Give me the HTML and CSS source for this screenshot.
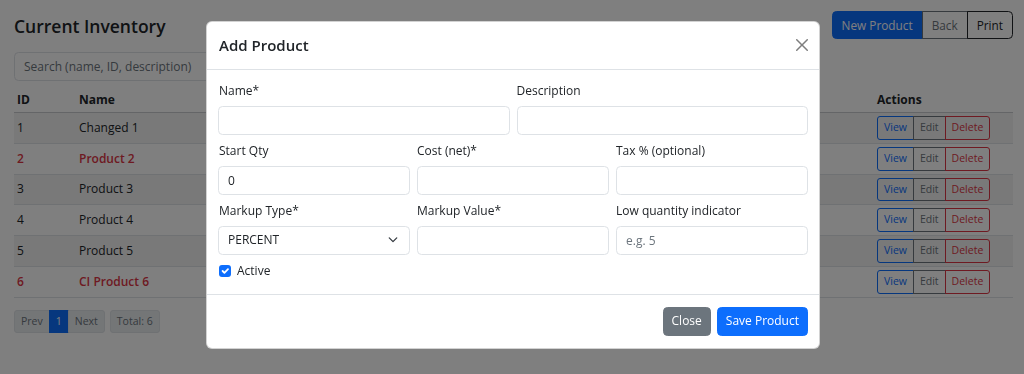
FILE: index.html
```html
<!DOCTYPE html>
<html>
<head>
    <meta charset="utf-8">
    <meta name="viewport" content="width=device-width">
    <title>Current Inventory</title>
    <link rel="stylesheet" href="styles.css">
</head>

<body>
    <div class="page">
        <div class="topbar">
            <h3 class="page__title">Current Inventory</h3>
            <div class="btn-group">
                <button class="btn btn--primary">New Product</button>
                <button class="btn btn--outline-secondary">Back</button>
                <button class="btn btn--outline-dark">Print</button>
            </div>
        </div>

        <input class="form-control search" type="text" placeholder="Search (name, ID, description)">

        <table class="inv">
            <colgroup>
                <col class="inv__col-id">
                <col>
                <col class="inv__col-actions">
            </colgroup>
            <thead>
                <tr>
                    <th>ID</th>
                    <th>Name</th>
                    <th>Actions</th>
                </tr>
            </thead>
            <tbody>
                <tr>
                    <td>1</td><td>Changed 1</td>
                    <td><div class="btn-group"><button class="btn btn--sm btn--outline-primary">View</button><button class="btn btn--sm btn--outline-secondary">Edit</button><button class="btn btn--sm btn--outline-danger">Delete</button></div></td>
                </tr>
                <tr class="inv__low">
                    <td>2</td><td>Product 2</td>
                    <td><div class="btn-group"><button class="btn btn--sm btn--outline-primary">View</button><button class="btn btn--sm btn--outline-secondary">Edit</button><button class="btn btn--sm btn--outline-danger">Delete</button></div></td>
                </tr>
                <tr>
                    <td>3</td><td>Product 3</td>
                    <td><div class="btn-group"><button class="btn btn--sm btn--outline-primary">View</button><button class="btn btn--sm btn--outline-secondary">Edit</button><button class="btn btn--sm btn--outline-danger">Delete</button></div></td>
                </tr>
                <tr>
                    <td>4</td><td>Product 4</td>
                    <td><div class="btn-group"><button class="btn btn--sm btn--outline-primary">View</button><button class="btn btn--sm btn--outline-secondary">Edit</button><button class="btn btn--sm btn--outline-danger">Delete</button></div></td>
                </tr>
                <tr>
                    <td>5</td><td>Product 5</td>
                    <td><div class="btn-group"><button class="btn btn--sm btn--outline-primary">View</button><button class="btn btn--sm btn--outline-secondary">Edit</button><button class="btn btn--sm btn--outline-danger">Delete</button></div></td>
                </tr>
                <tr class="inv__low">
                    <td>6</td><td>CI Product 6</td>
                    <td><div class="btn-group"><button class="btn btn--sm btn--outline-primary">View</button><button class="btn btn--sm btn--outline-secondary">Edit</button><button class="btn btn--sm btn--outline-danger">Delete</button></div></td>
                </tr>
            </tbody>
        </table>

        <div class="pager">
            <ul class="pagination">
                <li class="page-item">Prev</li>
                <li class="page-item page-item--active">1</li>
                <li class="page-item">Next</li>
            </ul>
            <span class="pager__total">Total: 6</span>
        </div>
    </div>

    <div class="backdrop"></div>

    <div class="modal">
        <div class="modal__content">
            <div class="modal__header">
                <h5 class="modal__title">Add Product</h5>
                <button class="btn-close" aria-label="Close">
                    <svg width="12" height="12" viewBox="0 0 16 16"><path fill="#000" d="M.293.293a1 1 0 0 1 1.414 0L8 6.586 14.293.293a1 1 0 1 1 1.414 1.414L9.414 8l6.293 6.293a1 1 0 0 1-1.414 1.414L8 9.414l-6.293 6.293a1 1 0 0 1-1.414-1.414L6.586 8 .293 1.707a1 1 0 0 1 0-1.414"/></svg>
                </button>
            </div>
            <div class="modal__body">
                <div class="form-row form-row--2">
                    <div class="field">
                        <label class="field__label">Name*</label>
                        <input class="form-control" type="text">
                    </div>
                    <div class="field">
                        <label class="field__label">Description</label>
                        <input class="form-control" type="text">
                    </div>
                </div>
                <div class="form-row form-row--3">
                    <div class="field">
                        <label class="field__label">Start Qty</label>
                        <input class="form-control" type="text" value="0">
                    </div>
                    <div class="field">
                        <label class="field__label">Cost (net)*</label>
                        <input class="form-control" type="text">
                    </div>
                    <div class="field">
                        <label class="field__label">Tax % (optional)</label>
                        <input class="form-control" type="text">
                    </div>
                </div>
                <div class="form-row form-row--3">
                    <div class="field">
                        <label class="field__label">Markup Type*</label>
                        <div class="form-control form-select">
                            <span>PERCENT</span>
                            <svg width="10" height="7.5" viewBox="0 0 16 12"><path fill="none" stroke="#343a40" stroke-linecap="round" stroke-linejoin="round" stroke-width="2" d="M2 3l6 6 6-6"/></svg>
                        </div>
                    </div>
                    <div class="field">
                        <label class="field__label">Markup Value*</label>
                        <input class="form-control" type="text">
                    </div>
                    <div class="field">
                        <label class="field__label">Low quantity indicator</label>
                        <input class="form-control" type="text" placeholder="e.g. 5">
                    </div>
                </div>
                <div class="form-check">
                    <span class="form-check__box">
                        <svg width="12" height="12" viewBox="0 0 20 20"><path fill="none" stroke="#fff" stroke-linecap="round" stroke-linejoin="round" stroke-width="3" d="m6 10 3 3 6-6"/></svg>
                    </span>
                    <label class="form-check__label">Active</label>
                </div>
            </div>
            <div class="modal__footer">
                <button class="btn btn--secondary">Close</button>
                <button class="btn btn--primary">Save Product</button>
            </div>
        </div>
    </div>
</body>
</html>
```

FILE: styles.css
```css
* {
    box-sizing: border-box;
}

html, body {
    margin: 0;
    padding: 0;
}

body {
    height: 100vh;
    font: 12px/1.5 "Open Sans", "Noto Sans", sans-serif;
    color: #212529;
    background: #fff;
}

button, input {
    font: inherit;
}

.page {
    padding: 11px 11px 0 14px;
}

.topbar {
    display: flex;
    justify-content: space-between;
    align-items: center;
}

.page__title {
    margin: 0;
    font-size: 17.5px;
    font-weight: 600;
    line-height: 1.2;
    padding-top: 2px;
}

/* buttons */
.btn {
    display: inline-block;
    padding: 4.5px 9px;
    font-size: 12px;
    line-height: 18px;
    border: 1px solid transparent;
    border-radius: 4.5px;
    background: transparent;
    cursor: pointer;
}

.topbar .btn {
    padding: 4px 9px;
    font-size: 11.8px;
}

.modal__footer .btn {
    padding-left: 8px;
    padding-right: 8px;
}

.btn--sm {
    padding: 3px 6px;
    font-size: 10.5px;
    line-height: 15.75px;
    border-radius: 3px;
}

.btn--primary {
    background: #0d6efd;
    border-color: #0d6efd;
    color: #fff;
}

.btn--secondary {
    background: #6c757d;
    border-color: #6c757d;
    color: #fff;
}

.btn--outline-primary {
    border-color: #0d6efd;
    color: #0d6efd;
}

.btn--outline-secondary {
    border-color: #6c757d;
    color: #6c757d;
}

.btn--outline-danger {
    border-color: #dc3545;
    color: #dc3545;
}

.btn--outline-dark {
    border-color: #212529;
    color: #212529;
}

.btn-group {
    display: inline-flex;
}

.btn-group .btn {
    border-radius: 0;
}

.btn-group .btn + .btn {
    margin-left: -1px;
}

.btn-group .btn:first-child {
    border-top-left-radius: 4.5px;
    border-bottom-left-radius: 4.5px;
}

.btn-group .btn:last-child {
    border-top-right-radius: 4.5px;
    border-bottom-right-radius: 4.5px;
}

.btn-group .btn--sm:first-child {
    border-top-left-radius: 3px;
    border-bottom-left-radius: 3px;
}

.btn-group .btn--sm:last-child {
    border-top-right-radius: 3px;
    border-bottom-right-radius: 3px;
}

/* inputs */
.form-control {
    display: block;
    width: 100%;
    height: 29px;
    padding: 4.5px 9px;
    font-size: 12px;
    line-height: 18px;
    color: #212529;
    background: #fff;
    border: 1px solid #dee2e6;
    border-radius: 4.5px;
}

.form-control::placeholder {
    color: #6c757d;
}

.search {
    margin-top: 13px;
    width: 600px;
}

/* table */
.inv {
    width: 100%;
    margin-top: 6px;
    border-collapse: collapse;
    table-layout: fixed;
}

.inv__col-id {
    width: 62px;
}

.inv__col-actions {
    width: 139px;
}

.inv th,
.inv td {
    padding: 3px;
    text-align: left;
    vertical-align: middle;
    border-bottom: 1px solid #dee2e6;
}

.inv th {
    font-weight: 700;
    line-height: 18px;
    padding-top: 4px;
    border-bottom-color: #c8cbcf;
}

.inv tbody tr:nth-child(odd) td {
    background: #f2f2f2;
}

.inv__low td {
    color: #dc3545;
    font-weight: 600;
}

.inv__low td .btn {
    font-weight: 400;
}

/* pagination */
.pager {
    display: flex;
    align-items: center;
    gap: 5px;
    margin-top: 12px;
}

.pagination {
    display: flex;
    margin: 0;
    padding: 0;
    list-style: none;
}

.page-item {
    padding: 3px 6px;
    font-size: 10.5px;
    line-height: 15.75px;
    color: #6c757d;
    background: #e9ecef;
    border: 1px solid #dee2e6;
}

.page-item + .page-item {
    margin-left: -1px;
}

.page-item:first-child {
    border-radius: 3px 0 0 3px;
}

.page-item:last-child {
    border-radius: 0 3px 3px 0;
}

.page-item--active {
    background: #0d6efd;
    border-color: #0d6efd;
    color: #fff;
}

.pager__total {
    padding: 3px 6px;
    font-size: 10.5px;
    line-height: 15.75px;
    color: #6c757d;
    background: #e9ecef;
    border: 1px solid #dee2e6;
    border-radius: 3px;
}

/* modal */
.backdrop {
    position: fixed;
    inset: 0;
    background: rgba(0, 0, 0, 0.5);
}

.modal {
    position: fixed;
    inset: 0;
    display: flex;
    justify-content: center;
    align-items: flex-start;
    padding: 21px 0 0 2px;
}

.modal__content {
    width: 614px;
    background: #fff;
    border: 1px solid rgba(0, 0, 0, 0.175);
    border-radius: 6px;
}

.modal__header {
    display: flex;
    align-items: center;
    justify-content: space-between;
    padding: 12px 11px 12px 12px;
    border-bottom: 1px solid #dee2e6;
}

.modal__title {
    margin: 0;
    font-size: 15px;
    font-weight: 600;
    line-height: 22.5px;
}

.btn-close {
    display: flex;
    padding: 0;
    border: 0;
    background: transparent;
    opacity: 0.5;
}

.modal__body {
    display: flex;
    flex-direction: column;
    gap: 7px;
    padding: 12px 11px 14px;
}

.form-row {
    display: grid;
    gap: 7px;
}

.form-row--2 {
    grid-template-columns: 1fr 1fr;
}

.form-row--3 {
    grid-template-columns: 1fr 1fr 1fr;
}

.field__label {
    display: block;
    margin-bottom: 6px;
    line-height: 18px;
}

.form-row .field:first-child .field__label {
    padding-left: 1px;
}

.form-select {
    display: flex;
    align-items: center;
    justify-content: space-between;
    padding-right: 11px;
}

.form-check {
    display: flex;
    align-items: center;
    gap: 6px;
    padding-left: 1px;
    line-height: 18px;
}

.form-check__box {
    display: flex;
    width: 12px;
    height: 12px;
    background: #0d6efd;
    border-radius: 3px;
}

.modal__footer {
    display: flex;
    justify-content: flex-end;
    gap: 6px;
    padding: 12px 11px;
    border-top: 1px solid #dee2e6;
}
```
